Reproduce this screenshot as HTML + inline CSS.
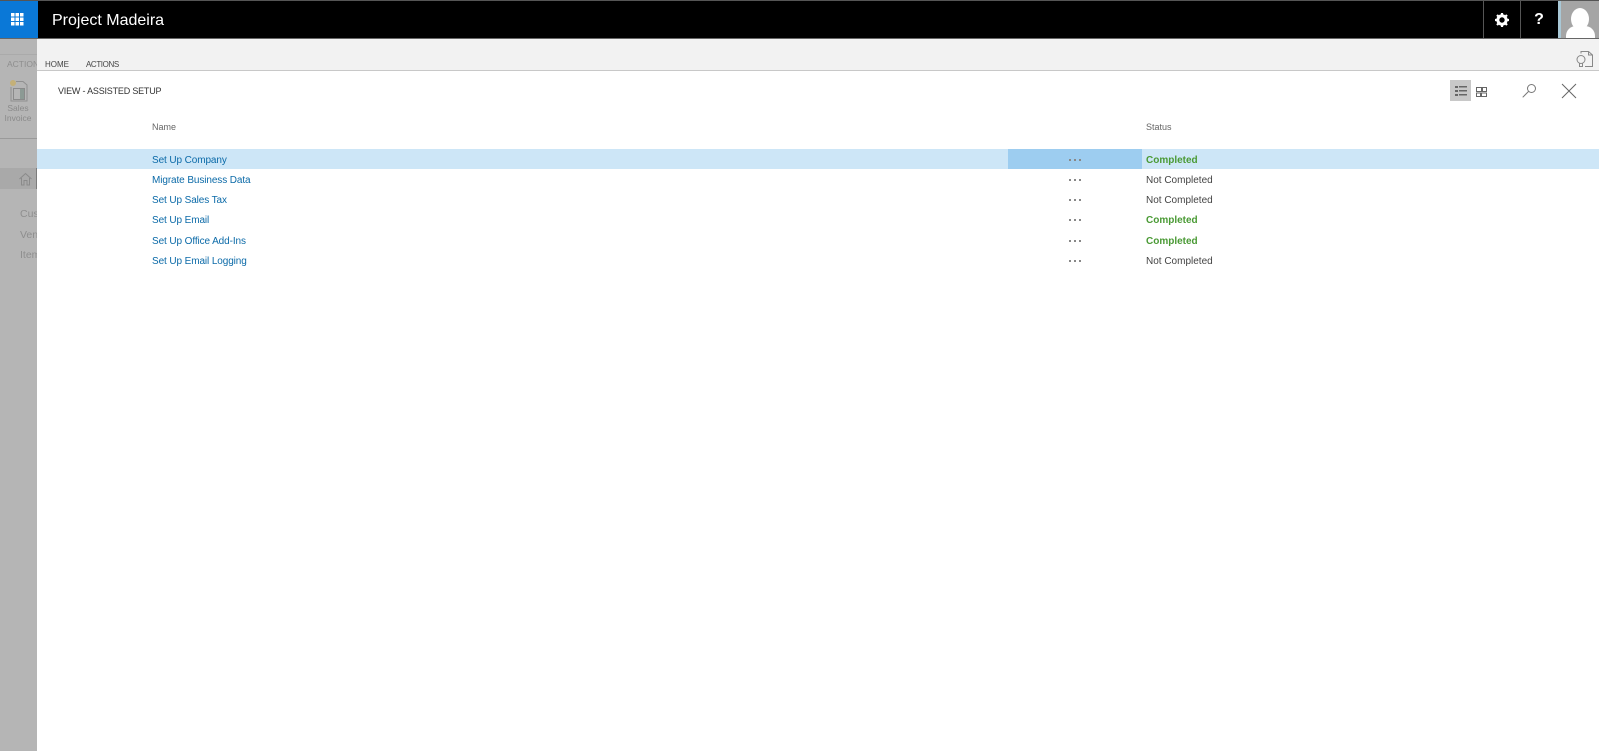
<!DOCTYPE html>
<html><head><meta charset="utf-8"><style>
html,body{margin:0;padding:0;width:1599px;height:751px;overflow:hidden;background:#fff;font-family:"Liberation Sans",sans-serif}
.a{position:absolute}
.t{position:absolute;white-space:nowrap;font-size:10px;line-height:14px}
.l{color:#0b6aa8;left:152px;letter-spacing:-.1px}
.s{left:1146px;color:#444}
.c{color:#4a9a35;font-weight:bold}
.d{position:absolute;left:1069px;width:12px;height:2px}
.d i{position:absolute;top:0;width:1.500px;height:1.500px;background:#888}
</style></head><body>
<div class="a" style="left:0;top:39px;width:37px;height:712px;background:#b5b5b5"></div>
<div class="a" style="left:0;top:54px;width:37px;height:1px;background:#aaa"></div>
<div class="a" style="left:0;top:138px;width:37px;height:1px;background:#9a9a9a"></div>
<div class="a" style="left:0;top:168px;width:37px;height:21px;background:#a9a9a9"></div>
<div class="a" style="left:36px;top:168px;width:1px;height:21px;background:#7c7c7c"></div>
<div class="t" style="left:7px;top:57px;font-size:8.500px;color:#8e8e8e;width:30px;overflow:hidden">ACTIONS</div>
<svg class="a" style="left:8px;top:78px" width="22" height="26" viewBox="0 0 22 26" fill="none"><circle cx="5" cy="5" r="3" fill="#c4b078"/><path d="M8 3.500H15L19 7V23H3V9" stroke="#909090"/><rect x="5.500" y="10.500" width="11" height="11" stroke="#8a8a8a"/><rect x="12" y="11" width="4" height="10" fill="#8c9a94"/></svg>
<div class="t" style="left:0;top:103px;width:36px;text-align:center;font-size:8.500px;line-height:10px;color:#8a8a8a;white-space:normal">Sales Invoice</div>
<svg class="a" style="left:18px;top:172px" width="15" height="14" viewBox="0 0 15 14" fill="none" stroke="#8a8a8a"><path d="M1.500 7L7.500 1.500L13.500 7M3.500 6V13H6V8.500H9V13H11.500V6"/></svg>
<div class="t" style="left:20px;top:207px;font-size:10.500px;color:#8e8e8e;width:17px;overflow:hidden">Customers</div>
<div class="t" style="left:20px;top:228px;font-size:10.500px;color:#8e8e8e;width:17px;overflow:hidden">Vendors</div>
<div class="t" style="left:20px;top:248px;font-size:10.500px;color:#8e8e8e;width:17px;overflow:hidden">Items</div>

<div class="a" style="left:0;top:0;width:1599px;height:39px;background:#000"></div>
<div class="a" style="left:0;top:0;width:1599px;height:1px;background:#555"></div>
<div class="a" style="left:0;top:38px;width:1599px;height:1px;background:#666"></div>
<div class="a" style="left:0;top:1px;width:37.500px;height:37px;background:#0a78d7"></div>
<svg class="a" style="left:11px;top:13px" width="14" height="13" fill="#fff"><rect width="3.500" height="3.500"/><rect x="4.500" width="3.500" height="3.500"/><rect x="9" width="3.500" height="3.500"/><rect y="4.500" width="3.500" height="3.500"/><rect x="4.500" y="4.500" width="3.500" height="3.500"/><rect x="9" y="4.500" width="3.500" height="3.500"/><rect y="9" width="3.500" height="3.500"/><rect x="4.500" y="9" width="3.500" height="3.500"/><rect x="9" y="9" width="3.500" height="3.500"/></svg>
<div class="t" style="left:52px;top:10px;font-size:16px;line-height:22px;color:#fff">Project Madeira</div>
<div class="a" style="left:1483px;top:1px;width:1px;height:37px;background:#555"></div>
<div class="a" style="left:1520px;top:1px;width:1px;height:37px;background:#555"></div>
<svg class="a" style="left:1494px;top:12px" width="16" height="16" viewBox="0 0 16 16"><circle cx="8" cy="8" r="4.200" fill="none" stroke="#fff" stroke-width="3"/><path d="M8 1V15M1 8H15M3 3L13 13M13 3L3 13" stroke="#fff" stroke-width="2.200" stroke-dasharray="2.500 9 2.500 0"/></svg>
<div class="t" style="left:1533px;top:10px;width:12px;text-align:center;font-size:16px;line-height:20px;font-weight:bold;color:#fff">?</div>
<div class="a" style="left:1558px;top:1px;width:41px;height:37px;background:#a5a5a5;overflow:hidden">
<div class="a" style="left:0;top:0;width:3px;height:37px;background:#a9c8d6"></div>
<div class="a" style="left:13px;top:7px;width:18px;height:22px;border-radius:50%;background:#fff"></div>
<div class="a" style="left:8px;top:25px;width:29px;height:20px;border-radius:10px 10px 0 0;background:#fff"></div>
</div>

<div class="a" style="left:37px;top:39px;width:1562px;height:31px;background:#f2f2f2"></div>
<div class="a" style="left:37px;top:70px;width:1562px;height:1px;background:#c8c8c8"></div>
<div class="t" style="left:45px;top:58px;font-size:8px;color:#444">HOME</div>
<div class="t" style="left:86px;top:58px;font-size:8px;letter-spacing:-.4px;color:#444">ACTIONS</div>
<svg class="a" style="left:1576px;top:50px" width="18" height="18" viewBox="0 0 18 18" fill="none" stroke="#888"><path d="M5 3.500V1.500H12.500L16.500 5V16.500H9M12.500 1.500V5H16.500"/><circle cx="5" cy="9.500" r="4"/><path d="M3.500 13.500V16.500H6.500V13.500"/></svg>

<div class="t" style="left:58px;top:84px;font-size:9px;letter-spacing:-.2px;color:#333">VIEW - ASSISTED SETUP</div>
<div class="a" style="left:1450px;top:80px;width:21px;height:21px;background:#c8c8c8"></div>
<svg class="a" style="left:1455px;top:86px" width="12" height="10" fill="#666"><rect y="0" width="3" height="2"/><rect y="4" width="3" height="2"/><rect y="8" width="3" height="2"/><rect x="4" y="0" width="8" height="1.500"/><rect x="4" y="4" width="8" height="1.500"/><rect x="4" y="8" width="8" height="1.500"/></svg>
<svg class="a" style="left:1476px;top:87px" width="11" height="10" fill="none" stroke="#666"><path d="M.5.500H5.500V4.500H.5ZM6.500.500H10.500V4.500H6.500ZM.5 6H4.500V9.500H.5ZM5.500 6H10.500V9.500H5.500Z"/></svg>
<svg class="a" style="left:1522px;top:83px" width="15" height="15" fill="none" stroke="#777"><circle cx="9.500" cy="5.500" r="4"/><path d="M6.600 8.400L.7 14.300"/></svg>
<svg class="a" style="left:1561px;top:83px" width="16" height="16" fill="none" stroke="#666"><path d="M1 1L15 15M15 1L1 15"/></svg>

<div class="t" style="left:152px;top:120px;font-size:9px;color:#666">Name</div>
<div class="t" style="left:1146px;top:120px;font-size:9px;color:#666">Status</div>

<div class="a" style="left:37px;top:149px;width:1562px;height:20px;background:#cde6f7"></div>
<div class="a" style="left:1008px;top:149px;width:134px;height:20px;background:#9dcdf0"></div>

<div class="t l" style="top:154px">Set Up Company</div>
<div class="t l" style="top:174px">Migrate Business Data</div>
<div class="t l" style="top:194px">Set Up Sales Tax</div>
<div class="t l" style="top:214px">Set Up Email</div>
<div class="t l" style="top:235px">Set Up Office Add-Ins</div>
<div class="t l" style="top:255px">Set Up Email Logging</div>

<div class="d" style="top:159px"><i style="left:0"></i><i style="left:5px"></i><i style="left:10px"></i></div>
<div class="d" style="top:179px"><i style="left:0"></i><i style="left:5px"></i><i style="left:10px"></i></div>
<div class="d" style="top:199px"><i style="left:0"></i><i style="left:5px"></i><i style="left:10px"></i></div>
<div class="d" style="top:219px"><i style="left:0"></i><i style="left:5px"></i><i style="left:10px"></i></div>
<div class="d" style="top:240px"><i style="left:0"></i><i style="left:5px"></i><i style="left:10px"></i></div>
<div class="d" style="top:260px"><i style="left:0"></i><i style="left:5px"></i><i style="left:10px"></i></div>

<div class="t s c" style="top:154px">Completed</div>
<div class="t s" style="top:174px">Not Completed</div>
<div class="t s" style="top:194px">Not Completed</div>
<div class="t s c" style="top:214px">Completed</div>
<div class="t s c" style="top:235px">Completed</div>
<div class="t s" style="top:255px">Not Completed</div>
</body></html>
